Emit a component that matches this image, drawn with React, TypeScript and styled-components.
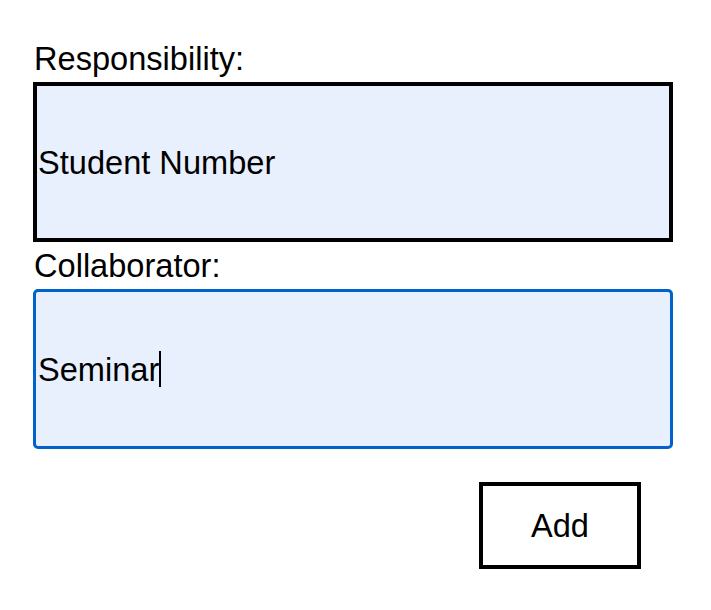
import React from "react";
import styled, { createGlobalStyle } from "styled-components";

const Global = createGlobalStyle`
  html, body { margin: 0; padding: 0; background: #ffffff; }
  body { font-family: "Liberation Sans", Arial, sans-serif; color: #000; }
`;

const Form = styled.form`
  display: flex;
  flex-direction: column;
  width: 640px;
  padding: 40px 0 0 33px;
`;

const Label = styled.label`
  display: block;
  font-size: 32.6px;
  line-height: 37px;
  margin: 0 0 5px 1px;
`;

const Field = styled.div<{ $focused?: boolean }>`
  box-sizing: border-box;
  height: 160px;
  display: flex;
  align-items: center;
  font-size: 32.6px;
  line-height: 37px;
  background: #e8f0fe;
  border: ${(p) => (p.$focused ? "3px solid #0062cc" : "4px solid #000")};
  border-radius: ${(p) => (p.$focused ? "5px" : "0")};
  padding: 0 0 0 ${(p) => (p.$focused ? "2px" : "1px")};
  margin-bottom: 5px;
  white-space: pre;
`;

const Caret = styled.span`
  display: inline-block;
  width: 1.5px;
  height: 36px;
  background: #000;
  vertical-align: middle;
  margin-left: 0;
`;

const ButtonRow = styled.div`
  display: flex;
  justify-content: flex-end;
  padding: 28px 32px 0 0;
`;

const AddButton = styled.button`
  box-sizing: border-box;
  width: 162px;
  height: 87px;
  background: #fff;
  border: 4px solid #000;
  font-family: "Liberation Sans", Arial, sans-serif;
  font-size: 32.6px;
  color: #000;
  padding: 0;
  cursor: pointer;
`;

export default function App() {
  return (
    <>
      <Global />
      <Form onSubmit={(e) => e.preventDefault()}>
        <Label>Responsibility:</Label>
        <Field role="textbox">Student Number</Field>
        <Label>Collaborator:</Label>
        <Field role="textbox" $focused>
          Seminar
          <Caret />
        </Field>
        <ButtonRow>
          <AddButton type="submit">Add</AddButton>
        </ButtonRow>
      </Form>
    </>
  );
}
